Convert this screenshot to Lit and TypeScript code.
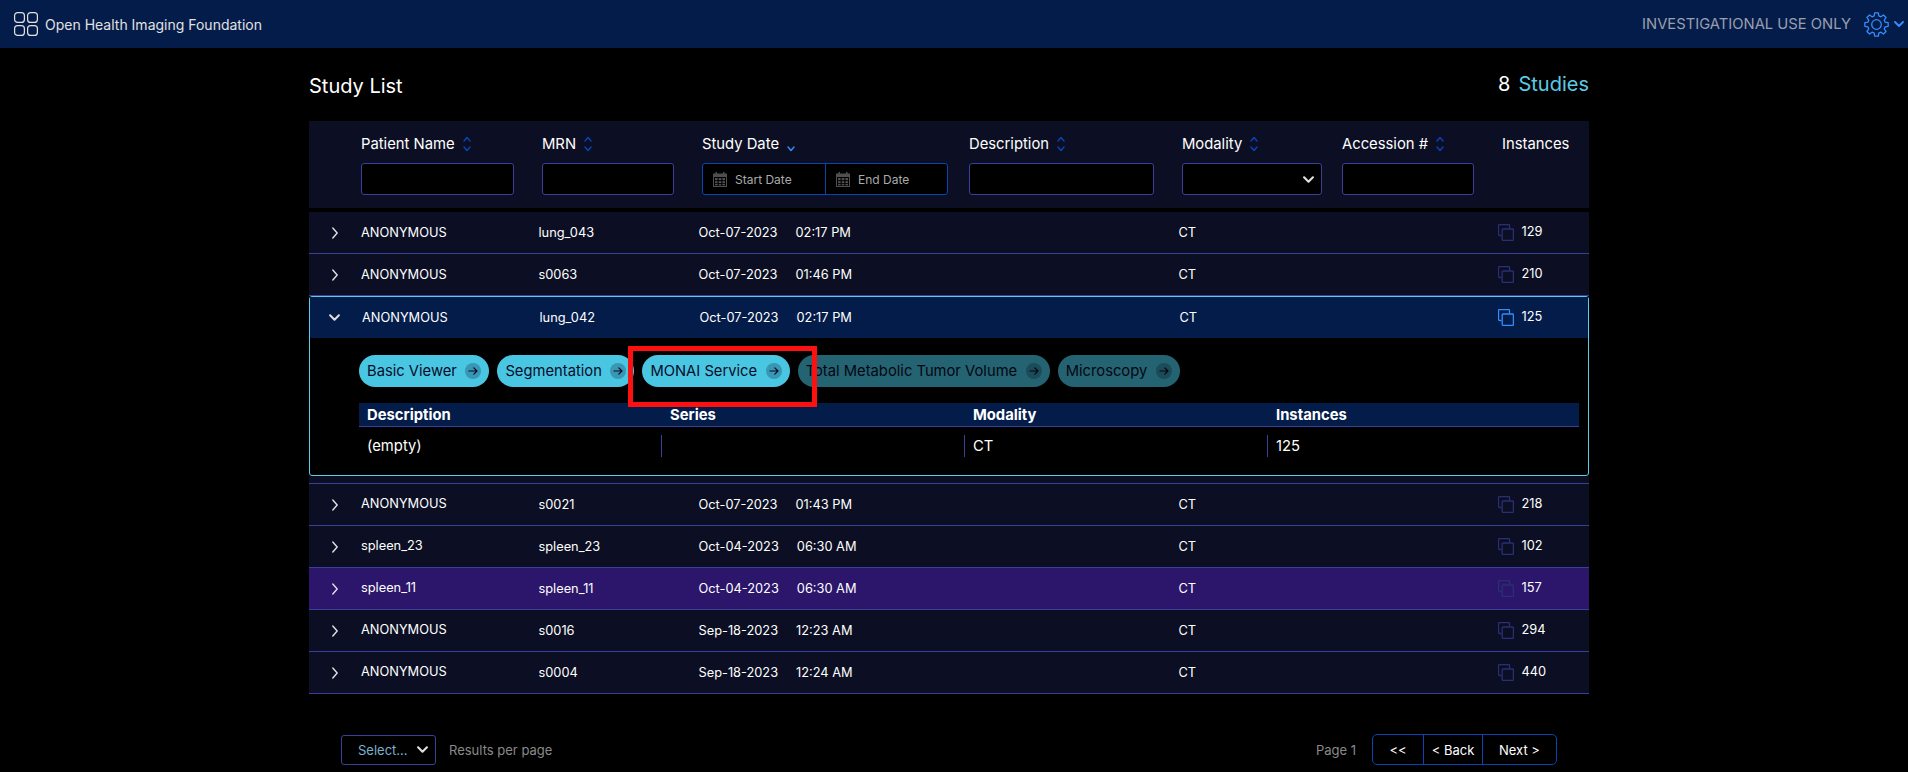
import { LitElement, html, css, svg } from 'lit';
import { customElement } from 'lit/decorators.js';

interface Study {
  name: string;
  mrn: string;
  date: string;
  time: string;
  count: number;
  purple?: boolean;
  open?: boolean;
  lower?: boolean;
}

const STUDIES: Study[] = [
  { name: 'ANONYMOUS', mrn: 'lung_043', date: 'Oct-07-2023', time: '02:17 PM', count: 129 },
  { name: 'ANONYMOUS', mrn: 's0063', date: 'Oct-07-2023', time: '01:46 PM', count: 210 },
  { name: 'ANONYMOUS', mrn: 'lung_042', date: 'Oct-07-2023', time: '02:17 PM', count: 125, open: true },
  { name: 'ANONYMOUS', mrn: 's0021', date: 'Oct-07-2023', time: '01:43 PM', count: 218, lower: true },
  { name: 'spleen_23', mrn: 'spleen_23', date: 'Oct-04-2023', time: '06:30 AM', count: 102, lower: true },
  { name: 'spleen_11', mrn: 'spleen_11', date: 'Oct-04-2023', time: '06:30 AM', count: 157, purple: true, lower: true },
  { name: 'ANONYMOUS', mrn: 's0016', date: 'Sep-18-2023', time: '12:23 AM', count: 294, lower: true },
  { name: 'ANONYMOUS', mrn: 's0004', date: 'Sep-18-2023', time: '12:24 AM', count: 440, lower: true },
];

const MODES = [
  { label: 'Basic Viewer' },
  { label: 'Segmentation' },
  { label: 'MONAI Service' },
  { label: 'Total Metabolic Tumor Volume', off: true },
  { label: 'Microscopy', off: true },
];

// 8 teeth around the centre of a 25 unit box
function gearPath() {
  const pts: string[] = [];
  const at = (deg: number, r: number) => {
    const a = ((deg - 90) * Math.PI) / 180;
    return `${(12.5 + r * Math.cos(a)).toFixed(2)} ${(12.5 + r * Math.sin(a)).toFixed(2)}`;
  };
  for (let i = 0; i < 8; i++) {
    const a = i * 45;
    pts.push(at(a - 15, 8.9), at(a - 9, 11.8), at(a + 9, 11.8), at(a + 15, 8.9));
  }
  return `M${pts.join('L')}Z`;
}

const logo = svg`<svg class="logo" width="24" height="24" viewBox="0 0 24 24" fill="none" stroke="#e1e1e1" stroke-width="1.2">
  <rect x="0.6" y="0.6" width="9.8" height="9.8" rx="3"></rect><rect x="13.6" y="0.6" width="9.8" height="9.8" rx="3"></rect>
  <rect x="0.6" y="13.6" width="9.8" height="9.8" rx="3"></rect><rect x="13.6" y="13.6" width="9.8" height="9.8" rx="3"></rect>
</svg>`;

const gear = svg`<svg class="gear" width="25" height="25" viewBox="0 0 25 25" fill="none" stroke="#348cfd" stroke-width="1.3" stroke-linejoin="round">
  <path d=${gearPath()}></path>
  <circle cx="12.5" cy="12.5" r="4.8"></circle>
</svg>`;

const chevronDown = (color: string, w = 10, h = 6, sw = 1.6) => svg`<svg width=${w} height=${h} viewBox="0 0 10 6" fill="none" stroke=${color} stroke-width=${sw} stroke-linecap="round" stroke-linejoin="round">
  <path d="M1 1l4 4 4-4"></path>
</svg>`;

const chevronRight = svg`<svg width="6" height="12" viewBox="0 0 6 12" fill="none" stroke="#e1e1e1" stroke-width="1.4" stroke-linecap="round" stroke-linejoin="round">
  <path d="M0.8 1l4.4 5-4.4 5"></path>
</svg>`;

const sortBoth = svg`<svg class="sort" width="8" height="16" viewBox="0 0 8 16" fill="none" stroke="#0944b3" stroke-width="1.4" stroke-linecap="round" stroke-linejoin="round">
  <path d="M1 5l3-3.5L7 5M1 11l3 3.5L7 11"></path>
</svg>`;

const sortDown = svg`<svg class="sort" width="8" height="16" viewBox="0 0 8 16" fill="none" stroke="#348cfd" stroke-width="1.4" stroke-linecap="round" stroke-linejoin="round">
  <path d="M1 11l3 3.5L7 11"></path>
</svg>`;

const calendar = svg`<svg class="cal" width="14" height="15" viewBox="0 0 14 15" fill="#4f4f4f">
  <rect x="2.5" y="0" width="1.5" height="3"></rect><rect x="10" y="0" width="1.5" height="3"></rect>
  <path d="M0 1.5h14V15H0z M1 5v9h12V5z" fill-rule="evenodd"></path>
  <rect x="2" y="6" width="2.6" height="2.2"></rect><rect x="5.7" y="6" width="2.6" height="2.2"></rect><rect x="9.4" y="6" width="2.6" height="2.2"></rect>
  <rect x="2" y="9.2" width="2.6" height="2"></rect><rect x="5.7" y="9.2" width="2.6" height="2"></rect><rect x="9.4" y="9.2" width="2.6" height="2"></rect>
  <rect x="2" y="12" width="2.6" height="1.4"></rect><rect x="5.7" y="12" width="2.6" height="1.4"></rect><rect x="9.4" y="12" width="2.6" height="1.4"></rect>
</svg>`;

const instances = (color: string) => svg`<svg class="inst" width="16" height="17" viewBox="0 0 16 17" fill="none" stroke=${color} stroke-width="1.3">
  <path d="M3.5 11.5H1.5a1 1 0 01-1-1v-9a1 1 0 011-1h9a1 1 0 011 1V4.5"></path>
  <rect x="4.2" y="5" width="11.2" height="11.4" rx="1"></rect>
</svg>`;

const arrow = svg`<svg width="10" height="10" viewBox="0 0 10 10" fill="none" stroke="#090c29" stroke-width="1.2" stroke-linecap="round" stroke-linejoin="round">
  <path d="M1 5h8M5.8 1.8L9 5 5.8 8.2"></path>
</svg>`;

@customElement('app-root')
export class AppRoot extends LitElement {
  static styles = css`
    :host {
      display: block;
      height: 772px;
      overflow: hidden;
      background: #000;
      color: #fff;
      font-family: Inter, 'Noto Sans', sans-serif;
    }

    .nav {
      height: 48px;
      box-sizing: border-box;
      background: #041c4a;
      display: flex;
      align-items: center;
      padding: 0 4px 0 14px;
    }

    .logo {
      margin-right: 7px;
    }

    .brand {
      font-size: 14px;
      color: #e1e1e1;
    }

    .nav-right {
      margin-left: auto;
      display: flex;
      align-items: center;
      color: #9a9fae;
      font-size: 14.75px;
    }

    .gear {
      margin: 1px 5px 0 13px;
    }

    .page {
      width: 1280px;
      margin-left: 309px;
    }

    .title-row {
      height: 73px;
      display: flex;
      justify-content: space-between;
      align-items: center;
    }

    .title {
      font-size: 20px;
      margin-top: 2px;
    }

    .total {
      font-size: 20px;
      margin-top: -2px;
    }

    .total span {
      color: #5acce6;
      margin-left: 8px;
    }

    .head {
      height: 87px;
      box-sizing: border-box;
      background: #0c0f24;
      display: grid;
      grid-template-columns: 52px 181px 160px 267px 213px 160px 160px 87px;
      padding-top: 11px;
      margin-bottom: 4px;
    }

    .head-cell {
      display: flex;
      flex-direction: column;
      gap: 7px;
    }

    .label {
      height: 24px;
      display: flex;
      align-items: center;
      font-size: 14.8px;
      gap: 8px;
    }

    .field {
      height: 32px;
      box-sizing: border-box;
      background: #000;
      border: 1px solid #3a3f99;
      border-radius: 3px;
      display: flex;
      align-items: center;
    }

    .dates {
      border-color: #0944b3;
      font-size: 12px;
      color: #aaa;
    }

    .date-part {
      height: 100%;
      display: flex;
      align-items: center;
      gap: 8px;
      padding-left: 10px;
      box-sizing: border-box;
    }

    .date-part:first-child {
      width: 123px;
      border-right: 1px solid #0944b3;
    }

    .mod {
      justify-content: flex-end;
      padding-right: 7px;
    }

    .row {
      height: 42px;
      box-sizing: border-box;
      background: #0c0f24;
      border-bottom: 1px solid #3a3f99;
      display: grid;
      grid-template-columns: 52px 177.5px 160px 267px 213px 160px 160px 90.5px;
      align-items: center;
      font-size: 12.8px;
    }

    .row.purple {
      background: #2b166b;
    }

    .row.lower .name {
      padding-bottom: 2px;
    }

    .chev {
      display: flex;
      justify-content: flex-end;
      padding-right: 23px;
    }

    .when span {
      margin-left: 18px;
    }

    .count {
      display: flex;
      align-items: center;
      gap: 8px;
      margin-left: -1px;
    }

    .count span {
      padding-bottom: 2px;
    }

    .open {
      height: 180px;
      box-sizing: border-box;
      border: 1px solid #5acce6;
      border-radius: 3px;
    }

    .open .row {
      height: 41px;
      background: #041c4a;
      border-bottom: none;
      grid-template-columns: 52px 177.5px 160px 267px 213px 160px 159px 91.5px;
    }

    .open .count {
      margin-left: -1px;
    }

    .open .chev {
      padding-right: 22px;
    }

    .spacer {
      height: 8px;
      box-sizing: border-box;
      background: #0c0f24;
      border-bottom: 1px solid #3a3f99;
    }

    .modes {
      position: relative;
      display: flex;
      gap: 8px;
      margin: 17px 0 16px 49px;
    }

    .mode {
      height: 32px;
      box-sizing: border-box;
      border-radius: 16px;
      background: #48c6e2;
      color: #090c29;
      display: flex;
      align-items: center;
      gap: 8.5px;
      padding: 0 8px;
      font-size: 14.75px;
    }

    .mode.off {
      opacity: 0.5;
    }

    .arrow {
      width: 16px;
      height: 16px;
      border-radius: 50%;
      background: rgba(9, 12, 41, 0.25);
      display: flex;
      align-items: center;
      justify-content: center;
    }

    .callout {
      position: absolute;
      left: 269px;
      top: -9px;
      width: 189px;
      height: 61px;
      box-sizing: border-box;
      border: 5px solid #fc1010;
    }

    .series {
      margin: 0 9px 0 49px;
      font-size: 14.8px;
    }

    .series-head,
    .series-row {
      display: grid;
      grid-template-columns: 303px 303px 303px 1fr;
    }

    .series-head {
      height: 24px;
      box-sizing: border-box;
      background: #041c4a;
      border-bottom: 1px solid #3a3f99;
      font-weight: 700;
      align-items: center;
    }

    .series-head div {
      padding-left: 8px;
    }

    .series-row {
      margin-top: 8px;
      height: 22px;
      align-items: center;
    }

    .series-row div {
      height: 22px;
      line-height: 22px;
      box-sizing: border-box;
      padding-left: 8px;
      border-right: 1px solid #3a3f99;
    }

    .series-row div:last-child {
      border-right: none;
    }

    .foot {
      display: flex;
      align-items: center;
      margin-top: 40px;
      padding: 0 32px;
      font-size: 13px;
      color: #8a8a8a;
    }

    .per-page {
      width: 95px;
      height: 30px;
      box-sizing: border-box;
      border: 1px solid #3a3f99;
      border-radius: 3px;
      color: #7bb2ce;
      display: flex;
      align-items: center;
      justify-content: space-between;
      padding: 0 7px 0 16px;
      margin-right: 13px;
    }

    .pager {
      margin-left: auto;
      display: flex;
      align-items: center;
    }

    .pager-btns {
      display: flex;
      height: 31px;
      box-sizing: border-box;
      margin-left: 16px;
      border: 1px solid #0944b3;
      border-radius: 5px;
      color: #fff;
    }

    .pager-btns div {
      box-sizing: border-box;
      display: flex;
      align-items: center;
      justify-content: center;
      border-right: 1px solid #0944b3;
    }

    .pager-btns div:last-child {
      border-right: none;
    }
  `;

  private renderRow(s: Study) {
    return html`
      <div class="row ${s.purple ? 'purple' : ''} ${s.lower ? 'lower' : ''}">
        <div class="chev">${s.open ? chevronDown('#e1e1e1', 11, 7, 1.8) : chevronRight}</div>
        <div class="name">${s.name}</div>
        <div>${s.mrn}</div>
        <div class="when">${s.date}<span>${s.time}</span></div>
        <div></div>
        <div>CT</div>
        <div></div>
        <div class="count">${instances(s.open ? '#348cfd' : '#2a2f72')}<span>${s.count}</span></div>
      </div>
    `;
  }

  private renderOpen(s: Study) {
    return html`
      <div class="open">
        ${this.renderRow(s)}
        <div class="modes">
          ${MODES.map(
            (m) => html`<div class="mode ${m.off ? 'off' : ''}">${m.label}<span class="arrow">${arrow}</span></div>`
          )}
          <div class="callout"></div>
        </div>
        <div class="series">
          <div class="series-head">
            <div>Description</div><div>Series</div><div>Modality</div><div>Instances</div>
          </div>
          <div class="series-row">
            <div>(empty)</div><div></div><div>CT</div><div>125</div>
          </div>
        </div>
      </div>
      <div class="spacer"></div>
    `;
  }

  render() {
    return html`
      <div class="nav">
        ${logo}
        <div class="brand">Open Health Imaging Foundation</div>
        <div class="nav-right">INVESTIGATIONAL USE ONLY ${gear}${chevronDown('#348cfd', 10, 6, 1.9)}</div>
      </div>
      <div class="page">
        <div class="title-row">
          <div class="title">Study List</div>
          <div class="total">8<span>Studies</span></div>
        </div>
        <div class="head">
          <div></div>
          <div class="head-cell" style="width:153px">
            <div class="label">Patient Name ${sortBoth}</div>
            <div class="field"></div>
          </div>
          <div class="head-cell" style="width:132px">
            <div class="label">MRN ${sortBoth}</div>
            <div class="field"></div>
          </div>
          <div class="head-cell" style="width:246px">
            <div class="label">Study Date ${sortDown}</div>
            <div class="field dates">
              <div class="date-part">${calendar}Start Date</div>
              <div class="date-part">${calendar}End Date</div>
            </div>
          </div>
          <div class="head-cell" style="width:185px">
            <div class="label">Description ${sortBoth}</div>
            <div class="field"></div>
          </div>
          <div class="head-cell" style="width:140px">
            <div class="label">Modality ${sortBoth}</div>
            <div class="field mod">${chevronDown('#e1e1e1', 11, 7, 1.9)}</div>
          </div>
          <div class="head-cell" style="width:132px">
            <div class="label">Accession # ${sortBoth}</div>
            <div class="field"></div>
          </div>
          <div class="head-cell">
            <div class="label">Instances</div>
          </div>
        </div>
        ${STUDIES.map((s) => (s.open ? this.renderOpen(s) : this.renderRow(s)))}
        <div class="foot">
          <div class="per-page">Select... ${chevronDown('#e1e1e1', 11, 7, 1.9)}</div>
          <div>Results per page</div>
          <div class="pager">
            Page 1
            <div class="pager-btns">
              <div style="width:51px">&lt;&lt;</div>
              <div style="width:59px">&lt; Back</div>
              <div style="width:73px">Next &gt;</div>
            </div>
          </div>
        </div>
      </div>
    `;
  }
}
